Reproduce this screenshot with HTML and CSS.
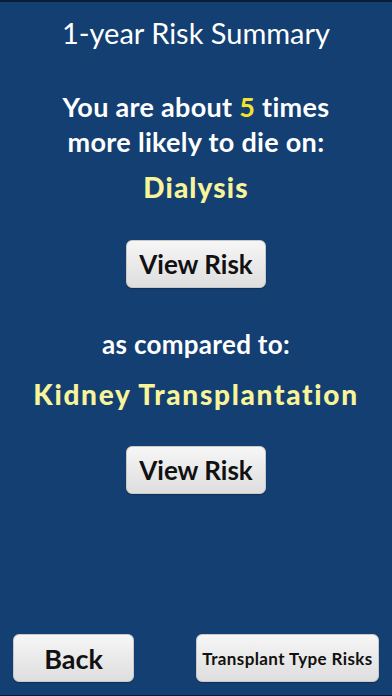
FILE: index.html
```html
<!DOCTYPE html>
<html>
<head>
<meta charset="utf-8">
<link rel="stylesheet" href="styles.css">
</head>
<body>
<div class="screen">
  <h1 class="title">1-year Risk Summary</h1>
  <p class="lead">You are about <span class="num">5</span> times<br>more likely to die on:</p>
  <p class="option first">Dialysis</p>
  <div class="btn-row"><button class="btn view">View Risk</button></div>
  <p class="compare">as compared to:</p>
  <p class="option second">Kidney Transplantation</p>
  <div class="btn-row lower"><button class="btn view">View Risk</button></div>
  <div class="spacer"></div>
  <div class="footer">
    <button class="btn back">Back</button>
    <button class="btn types">Transplant Type Risks</button>
  </div>
</div>
</body>
</html>
```

FILE: styles.css
```css
html, body {
  margin: 0;
  padding: 0;
}
body {
  background: #0a1d36;
  font-family: Lato, "Open Sans", sans-serif;
}
.screen {
  box-sizing: border-box;
  width: 392px;
  margin-top: 2px;
  height: 693px;
  background: #143f72;
  display: flex;
  flex-direction: column;
  align-items: center;
  color: #fff;
  text-align: center;
}
.title {
  margin: 13px 0 0;
  font-weight: 400;
  font-size: 29px;
  line-height: 36px;
}
.lead {
  margin: 38px 0 0;
  font-weight: 700;
  font-size: 27px;
  line-height: 35px;
  letter-spacing: 0.3px;
}
.num {
  color: #f6e12e;
}
.option {
  font-weight: 900;
  font-size: 28px;
  line-height: 30px;
  color: #f7f49a;
}
.option.first {
  margin: 13px 0 0;
  letter-spacing: 1.1px;
}
.option.second {
  margin: 20px 0 0;
  letter-spacing: 1.7px;
}
.btn-row {
  margin-top: 38px;
}
.btn-row.lower {
  margin-top: 37px;
}
.btn {
  box-sizing: border-box;
  height: 48px;
  border: 1px solid #c9c9c9;
  border-radius: 6px;
  background: linear-gradient(#f6f6f6, #dedede);
  color: #111;
  font-family: Lato, "Open Sans", sans-serif;
  font-weight: 700;
  padding: 0;
  box-shadow: 0 1px 1px rgba(0,0,0,0.25);
}
.view {
  width: 140px;
  font-size: 26px;
}
.compare {
  margin: 41px 0 0;
  font-weight: 700;
  font-size: 26px;
  line-height: 30px;
  letter-spacing: 0.3px;
}
.spacer {
  flex: 1;
}
.footer {
  align-self: stretch;
  display: flex;
  justify-content: space-between;
  padding: 0 13px 13px 13px;
}
.back {
  width: 121px;
  font-size: 27px;
}
.types {
  width: 183px;
  font-size: 17px;
  letter-spacing: 0.4px;
}
```
